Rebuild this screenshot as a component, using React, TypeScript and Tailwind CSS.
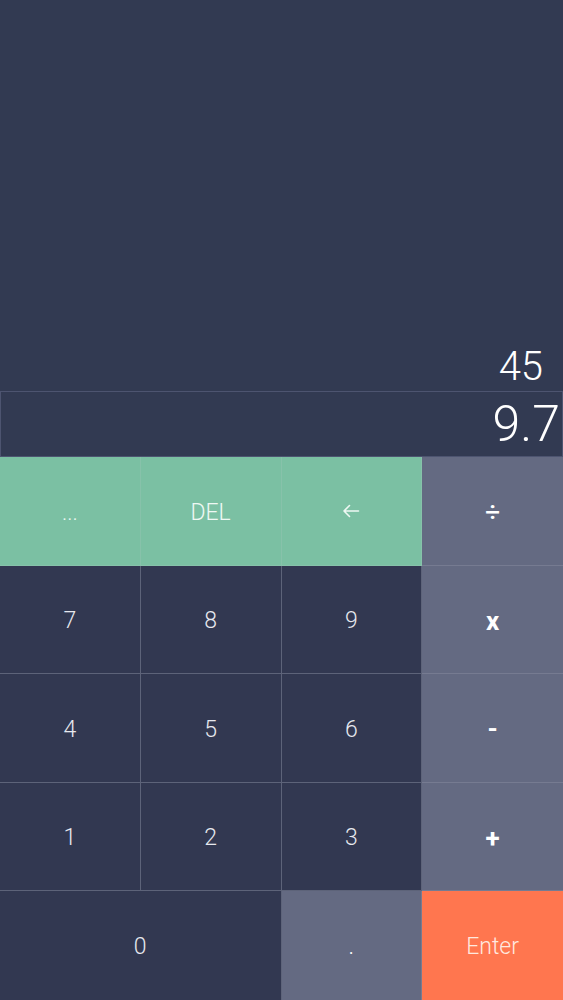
import React from 'react';

type Key = {
  label: string;
  tone: 'green' | 'dark' | 'grey' | 'orange';
  span?: boolean;
  size: string;
};

const keys: Key[] = [
  { label: '...', tone: 'green', size: 'text-[22px] font-light' },
  { label: 'DEL', tone: 'green', size: 'text-[23px] font-light' },
  { label: '←', tone: 'green', size: 'text-[24px] font-light' },
  { label: '÷', tone: 'grey', size: 'text-[26px] font-medium' },
  { label: '7', tone: 'dark', size: 'text-[23px] font-light' },
  { label: '8', tone: 'dark', size: 'text-[23px] font-light' },
  { label: '9', tone: 'dark', size: 'text-[23px] font-light' },
  { label: 'x', tone: 'grey', size: 'text-[26px] font-bold' },
  { label: '4', tone: 'dark', size: 'text-[23px] font-light' },
  { label: '5', tone: 'dark', size: 'text-[23px] font-light' },
  { label: '6', tone: 'dark', size: 'text-[23px] font-light' },
  { label: '-', tone: 'grey', size: 'text-[26px] font-bold' },
  { label: '1', tone: 'dark', size: 'text-[23px] font-light' },
  { label: '2', tone: 'dark', size: 'text-[23px] font-light' },
  { label: '3', tone: 'dark', size: 'text-[23px] font-light' },
  { label: '+', tone: 'grey', size: 'text-[26px] font-bold' },
  { label: '0', tone: 'dark', span: true, size: 'text-[23px] font-light' },
  { label: '.', tone: 'grey', size: 'text-[23px] font-light' },
  { label: 'Enter', tone: 'orange', size: 'text-[23px] font-light' },
];

const toneClass: Record<Key['tone'], string> = {
  green: 'bg-[#7bc0a3] border-[#87c2aa] text-[#eef8f3]',
  dark: 'bg-[#323851] border-[#5d6379] text-[#e6e8ee]',
  grey: 'bg-[#646a82] border-[#767b91] text-white',
  orange: 'bg-[#ff764f] border-[#ff764f] text-[#ffe8df]',
};

const BackArrow = () => (
  <svg width="18" height="14" viewBox="0 0 18 14" fill="none" className="mb-[4px]">
    <path d="M16.5 7H2M7.5 1.5L2 7l5.5 5.5" stroke="currentColor" strokeWidth="1.6" strokeLinecap="round" strokeLinejoin="round" />
  </svg>
);

const App: React.FC = () => {
  return (
    <div className="flex h-[1000px] w-[563px] flex-col overflow-hidden bg-[#323a52] font-['Roboto','Liberation_Sans',sans-serif] text-white">
      <div className="flex flex-1 items-end justify-end px-[20px] pb-[4px]">
        <div className="text-[40px] font-light leading-none">45</div>
      </div>
      <div className="flex h-[66px] items-center justify-end border border-[#4d5470] pr-[2px]">
        <div className="text-[50px] font-light leading-none">9.7</div>
      </div>
      <div className="grid h-[543px] grid-cols-4 grid-rows-5">
        {keys.map((key, i) => {
          const col = i < 16 ? i % 4 : i === 16 ? 0 : i === 17 ? 2 : 3;
          const lastCol = col === 3;
          const lastRow = i >= 16;
          return (
            <div
              key={key.label}
              className={[
                'flex items-center justify-center pt-[4px]',
                toneClass[key.tone],
                key.span ? 'col-span-2' : '',
                lastCol ? '' : 'border-r',
                lastRow ? '' : 'border-b',
                key.size,
              ].join(' ')}
            >
              {key.label === '←' ? <BackArrow /> : key.label}
            </div>
          );
        })}
      </div>
    </div>
  );
};

export default App;
